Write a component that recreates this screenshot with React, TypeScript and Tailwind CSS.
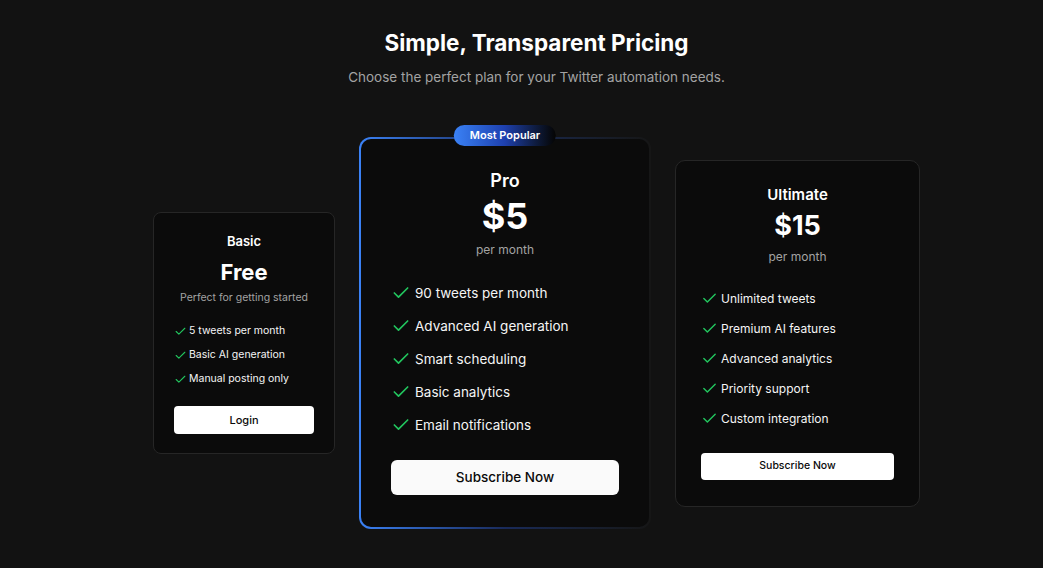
import React from 'react';
import { Check } from 'lucide-react';

const BASIC = ['5 tweets per month', 'Basic AI generation', 'Manual posting only'];
const PRO = ['90 tweets per month', 'Advanced AI generation', 'Smart scheduling', 'Basic analytics', 'Email notifications'];
const ULTIMATE = ['Unlimited tweets', 'Premium AI features', 'Advanced analytics', 'Priority support', 'Custom integration'];

const App: React.FC = () => {
  return (
    <div
      className="min-h-screen bg-[#121212] pl-[30px] pt-[27px] text-white"
      style={{ fontFamily: 'Inter, "Noto Sans", sans-serif' }}
    >
      <div className="text-center">
        <h1 className="text-[22.5px] font-bold leading-8 text-white">Simple, Transparent Pricing</h1>
        <p className="mt-2 text-[13.5px] leading-5 text-[#a3a3a3]">
          Choose the perfect plan for your Twitter automation needs.
        </p>
      </div>

      <div className="mt-[50px] flex items-center justify-center gap-6">
        {/* Basic */}
        <div className="w-[182px] rounded-lg border border-[#262626] bg-[#0b0b0b] px-5 pb-[19px] pt-[18px]">
          <div className="text-center">
            <h3 className="text-[13px] font-semibold leading-5">Basic</h3>
            <div className="mt-[7px] text-[22px] font-bold leading-7">Free</div>
            <p className="mt-1 text-[10.5px] leading-4 text-[#a3a3a3]">Perfect for getting started</p>
          </div>
          <ul className="mt-[17px] space-y-2">
            {BASIC.map((f) => (
              <li key={f} className="flex items-center gap-[2px] text-[10.5px] leading-4 text-[#f5f5f5]">
                <Check className="h-[13px] w-[13px] shrink-0 text-[#22c55e]" strokeWidth={2} />
                {f}
              </li>
            ))}
          </ul>
          <button className="mt-[19px] h-7 w-full rounded bg-white text-[11px] font-medium text-[#0a0a0a]">
            Login
          </button>
        </div>

        {/* Pro */}
        <div className="relative w-[292px] rounded-xl bg-gradient-to-r from-[#3b82f6] via-[#1e3a8a]/60 to-[#161616] p-[2px]">
          <div className="absolute -top-[12px] left-1/2 -translate-x-1/2 whitespace-nowrap rounded-full bg-gradient-to-r from-[#3b82f6] via-[#1e40af] to-[#050505] px-4 py-[3px] text-[11px] font-semibold leading-[15px] text-white">
            Most Popular
          </div>
          <div className="rounded-[10px] bg-[#0b0b0b] px-[30px] pb-[32px] pt-[28px]">
            <div className="text-center">
              <h3 className="text-[18px] font-semibold leading-7">Pro</h3>
              <div className="mt-px text-4xl font-bold leading-10">$5</div>
              <p className="mt-1 text-[12px] leading-5 text-[#a3a3a3]">per month</p>
            </div>
            <ul className="mt-[21px] space-y-[9px]">
              {PRO.map((f) => (
                <li key={f} className="flex items-center gap-[4px] text-[13.5px] leading-6 text-[#f5f5f5]">
                  <Check className="h-5 w-5 shrink-0 text-[#22c55e]" strokeWidth={2} />
                  {f}
                </li>
              ))}
            </ul>
            <button className="mt-[23px] h-[35px] w-full rounded-md bg-[#fafafa] text-[13.5px] font-medium text-[#0a0a0a]">
              Subscribe Now
            </button>
          </div>
        </div>

        {/* Ultimate */}
        <div className="w-[245px] rounded-[10px] border border-[#262626] bg-[#0b0b0b] px-[25px] pb-[26px] pt-[22px]">
          <div className="text-center">
            <h3 className="text-[15px] font-semibold leading-6">Ultimate</h3>
            <div className="mt-px text-[27px] font-bold leading-9">$15</div>
            <p className="mt-[3px] text-[12px] leading-5 text-[#a3a3a3]">per month</p>
          </div>
          <ul className="mt-[22px] space-y-[10px]">
            {ULTIMATE.map((f) => (
              <li key={f} className="flex items-center gap-[3px] text-[12px] leading-5 text-[#f5f5f5]">
                <Check className="h-[17px] w-[17px] shrink-0 text-[#22c55e]" strokeWidth={2} />
                {f}
              </li>
            ))}
          </ul>
          <button className="mt-6 h-[27px] w-full rounded bg-white text-[10.5px] font-medium text-[#0a0a0a]">
            Subscribe Now
          </button>
        </div>
      </div>
    </div>
  );
};

export default App;
